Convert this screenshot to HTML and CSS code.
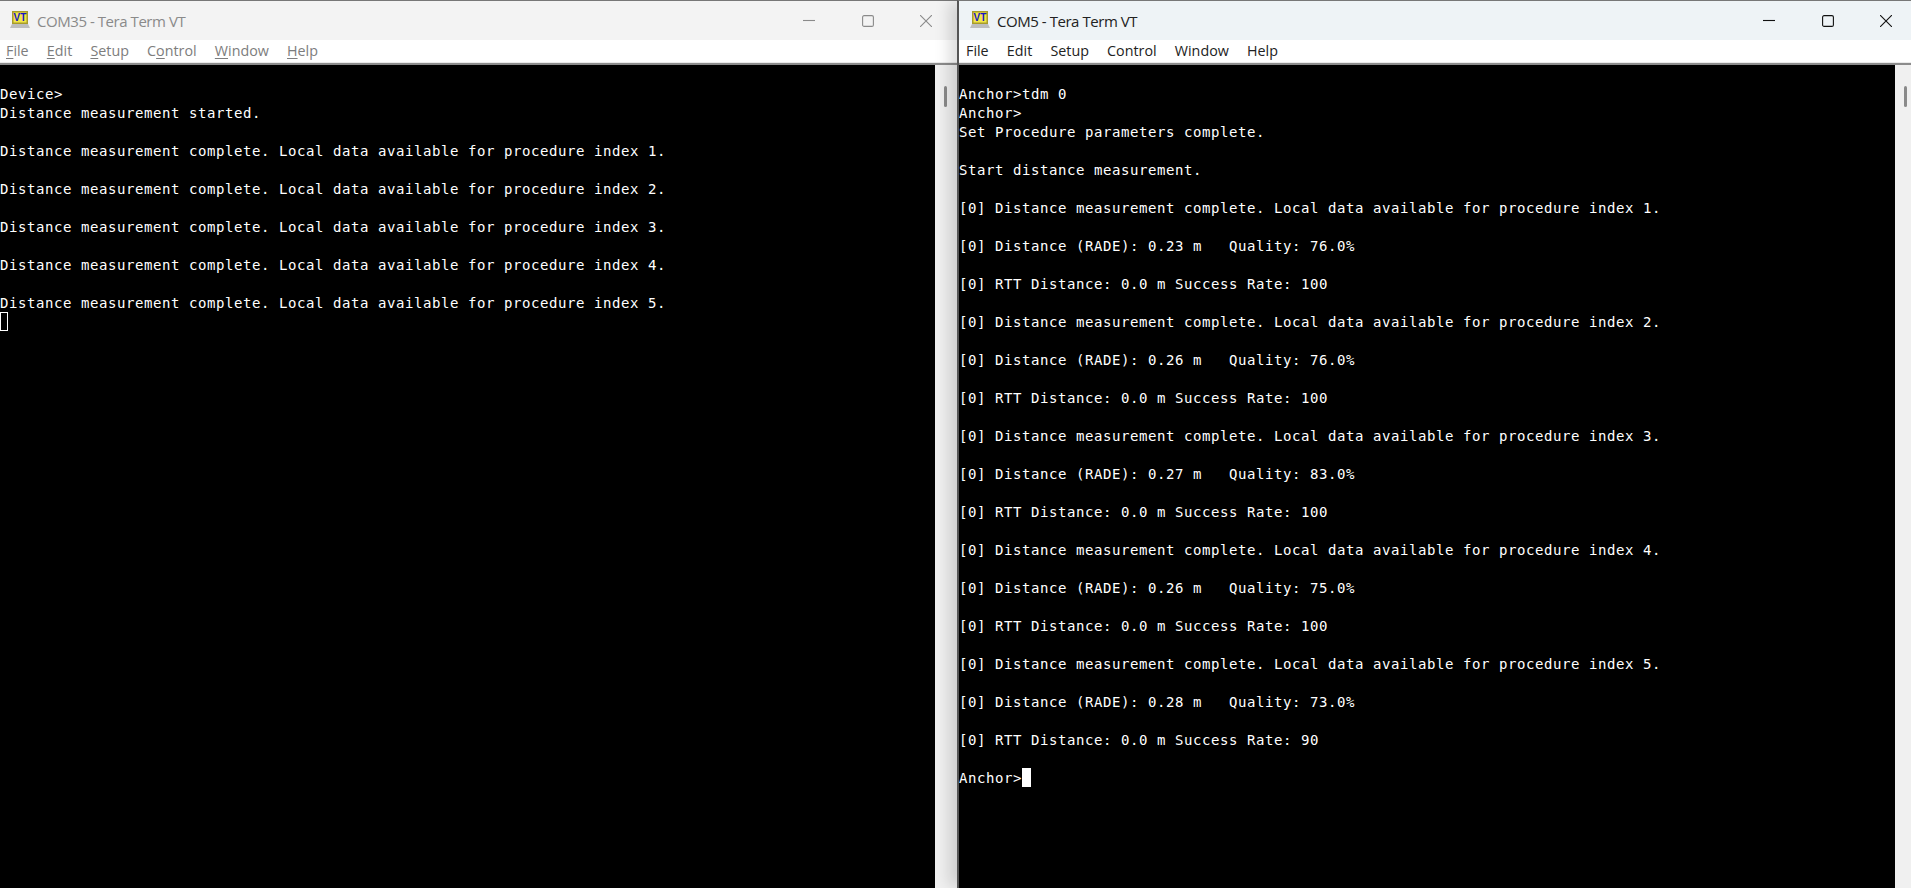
FILE: index.html
```html
<!DOCTYPE html>
<html lang="en">
<head>
<meta charset="utf-8">
<title>Tera Term</title>
<link rel="stylesheet" href="styles.css">
</head>
<body>
<main class="desktop">
  <section class="win win-inactive">
    <header class="titlebar">
      <svg class="app-icon" viewBox="0 0 20 17"><path class="ic-base" d="M0 17l2-4h16l2 4z"/><rect class="ic-frame" x="2" y="0" width="16" height="13"/><rect class="ic-screen" x="3.5" y="1.5" width="13" height="10"/><text class="ic-text" x="10" y="10.4">VT</text></svg>
      <span class="title">COM35 - Tera Term VT</span>
      <div class="controls">
        <svg class="ctl" viewBox="0 0 12 12"><path d="M0 5.5h12"/></svg>
        <svg class="ctl" viewBox="0 0 12 12"><rect x="0.6" y="0.6" width="10.8" height="10.8" rx="1.5"/></svg>
        <svg class="ctl" viewBox="0 0 12 12"><path d="M0 0l12 12M12 0L0 12"/></svg>
      </div>
    </header>
    <nav class="menu">
      <span><u>F</u>ile</span><span><u>E</u>dit</span><span><u>S</u>etup</span><span>C<u>o</u>ntrol</span><span><u>W</u>indow</span><span><u>H</u>elp</span>
    </nav>
    <div class="term-wrap">
<pre class="term">

Device&gt;
Distance measurement started.

Distance measurement complete. Local data available for procedure index 1.

Distance measurement complete. Local data available for procedure index 2.

Distance measurement complete. Local data available for procedure index 3.

Distance measurement complete. Local data available for procedure index 4.

Distance measurement complete. Local data available for procedure index 5.
<span class="cursor hollow"> </span></pre>
      <div class="scrollbar"><div class="thumb"></div></div>
    </div>
  </section>
  <section class="win win-active">
    <header class="titlebar">
      <svg class="app-icon" viewBox="0 0 20 17"><path class="ic-base" d="M0 17l2-4h16l2 4z"/><rect class="ic-frame" x="2" y="0" width="16" height="13"/><rect class="ic-screen" x="3.5" y="1.5" width="13" height="10"/><text class="ic-text" x="10" y="10.4">VT</text></svg>
      <span class="title">COM5 - Tera Term VT</span>
      <div class="controls">
        <svg class="ctl" viewBox="0 0 12 12"><path d="M0 5.5h12"/></svg>
        <svg class="ctl" viewBox="0 0 12 12"><rect x="0.6" y="0.6" width="10.8" height="10.8" rx="1.5"/></svg>
        <svg class="ctl" viewBox="0 0 12 12"><path d="M0 0l12 12M12 0L0 12"/></svg>
      </div>
    </header>
    <nav class="menu">
      <span>File</span><span>Edit</span><span>Setup</span><span>Control</span><span>Window</span><span>Help</span>
    </nav>
    <div class="term-wrap">
<pre class="term">

Anchor&gt;tdm 0
Anchor&gt;
Set Procedure parameters complete.

Start distance measurement.

[0] Distance measurement complete. Local data available for procedure index 1.

[0] Distance (RADE): 0.23 m   Quality: 76.0%

[0] RTT Distance: 0.0 m Success Rate: 100

[0] Distance measurement complete. Local data available for procedure index 2.

[0] Distance (RADE): 0.26 m   Quality: 76.0%

[0] RTT Distance: 0.0 m Success Rate: 100

[0] Distance measurement complete. Local data available for procedure index 3.

[0] Distance (RADE): 0.27 m   Quality: 83.0%

[0] RTT Distance: 0.0 m Success Rate: 100

[0] Distance measurement complete. Local data available for procedure index 4.

[0] Distance (RADE): 0.26 m   Quality: 75.0%

[0] RTT Distance: 0.0 m Success Rate: 100

[0] Distance measurement complete. Local data available for procedure index 5.

[0] Distance (RADE): 0.28 m   Quality: 73.0%

[0] RTT Distance: 0.0 m Success Rate: 90

Anchor&gt;<span class="cursor"> </span></pre>
      <div class="scrollbar"><div class="thumb"></div></div>
    </div>
  </section>
</main>
</body>
</html>
```
FILE: styles.css
```css
* { box-sizing: border-box; }
html, body { margin: 0; height: 100%; overflow: hidden; background: #000; }
.desktop { display: grid; grid-template-columns: 957px 954px; height: 888px; }
.win { display: flex; flex-direction: column; min-width: 0; height: 888px; border-top: 1px solid #777; }
.win-active { border-left: 2px solid #555; position: relative; z-index: 1; box-shadow: -10px 0 14px -2px rgba(0, 0, 0, 0.14); }
.titlebar { height: 39px; display: flex; align-items: center; padding-left: 10px; font: 15px "Open Sans", "Liberation Sans", sans-serif; letter-spacing: -0.45px; flex: none; }
.win-inactive .titlebar { background: #f3f3f3; color: #8a8a8a; }
.win-active .titlebar { background: #eef3f6; color: #222; padding-left: 11px; }
.app-icon { width: 20px; height: 17px; margin-right: 7px; margin-top: -2px; flex: none; }
.ic-base { fill: #bdbdbd; }
.ic-frame { fill: #a89c2a; }
.ic-screen { fill: #f2e648; }
.ic-text { font: bold 10px "Liberation Sans", sans-serif; fill: #1616c4; text-anchor: middle; letter-spacing: 0; }
.title { white-space: nowrap; }
.controls { margin-left: auto; display: flex; align-items: center; height: 100%; padding-right: 25px; gap: 46.5px; }
.win-active .controls { padding-right: 19px; }
.ctl { width: 12px; height: 12px; fill: none; stroke-width: 1.1; flex: none; }
.win-inactive .ctl { stroke: #8a8a8a; }
.win-active .ctl { stroke: #111; }
.menu { height: 23px; background: #fff; display: flex; gap: 18.2px; padding: 0 0 2px 6px; align-items: center; border-bottom: 1px solid #eaeaea; font: 14.3px "Open Sans", "Liberation Sans", sans-serif; flex: none; }
.win-inactive .menu { color: #7d7d7d; }
.win-active .menu { color: #222; padding-left: 7px; }
.menu u { text-underline-offset: 2px; }
.term-wrap { flex: 1; display: flex; min-height: 0; border-top: 2px solid #8c8c8c; background: #000; }
.term { flex: 1; margin: 0; padding-top: 1px; color: #fff; font: 14px/19px "DejaVu Sans Mono", monospace; letter-spacing: 0.57px; overflow: hidden; }
.cursor { display: inline-block; width: 9px; height: 19px; margin-top: -1px; background: #fff; vertical-align: top; }
.cursor.hollow { width: 8px; background: #000; border: 1px solid #fff; }
.scrollbar { width: 22px; background: #f0f0f0; flex: none; padding: 21px 0 0 9px; }
.win-active .scrollbar { width: 16px; }
.thumb { width: 3px; height: 21px; background: #8a8a8a; border-radius: 2px; }
```
